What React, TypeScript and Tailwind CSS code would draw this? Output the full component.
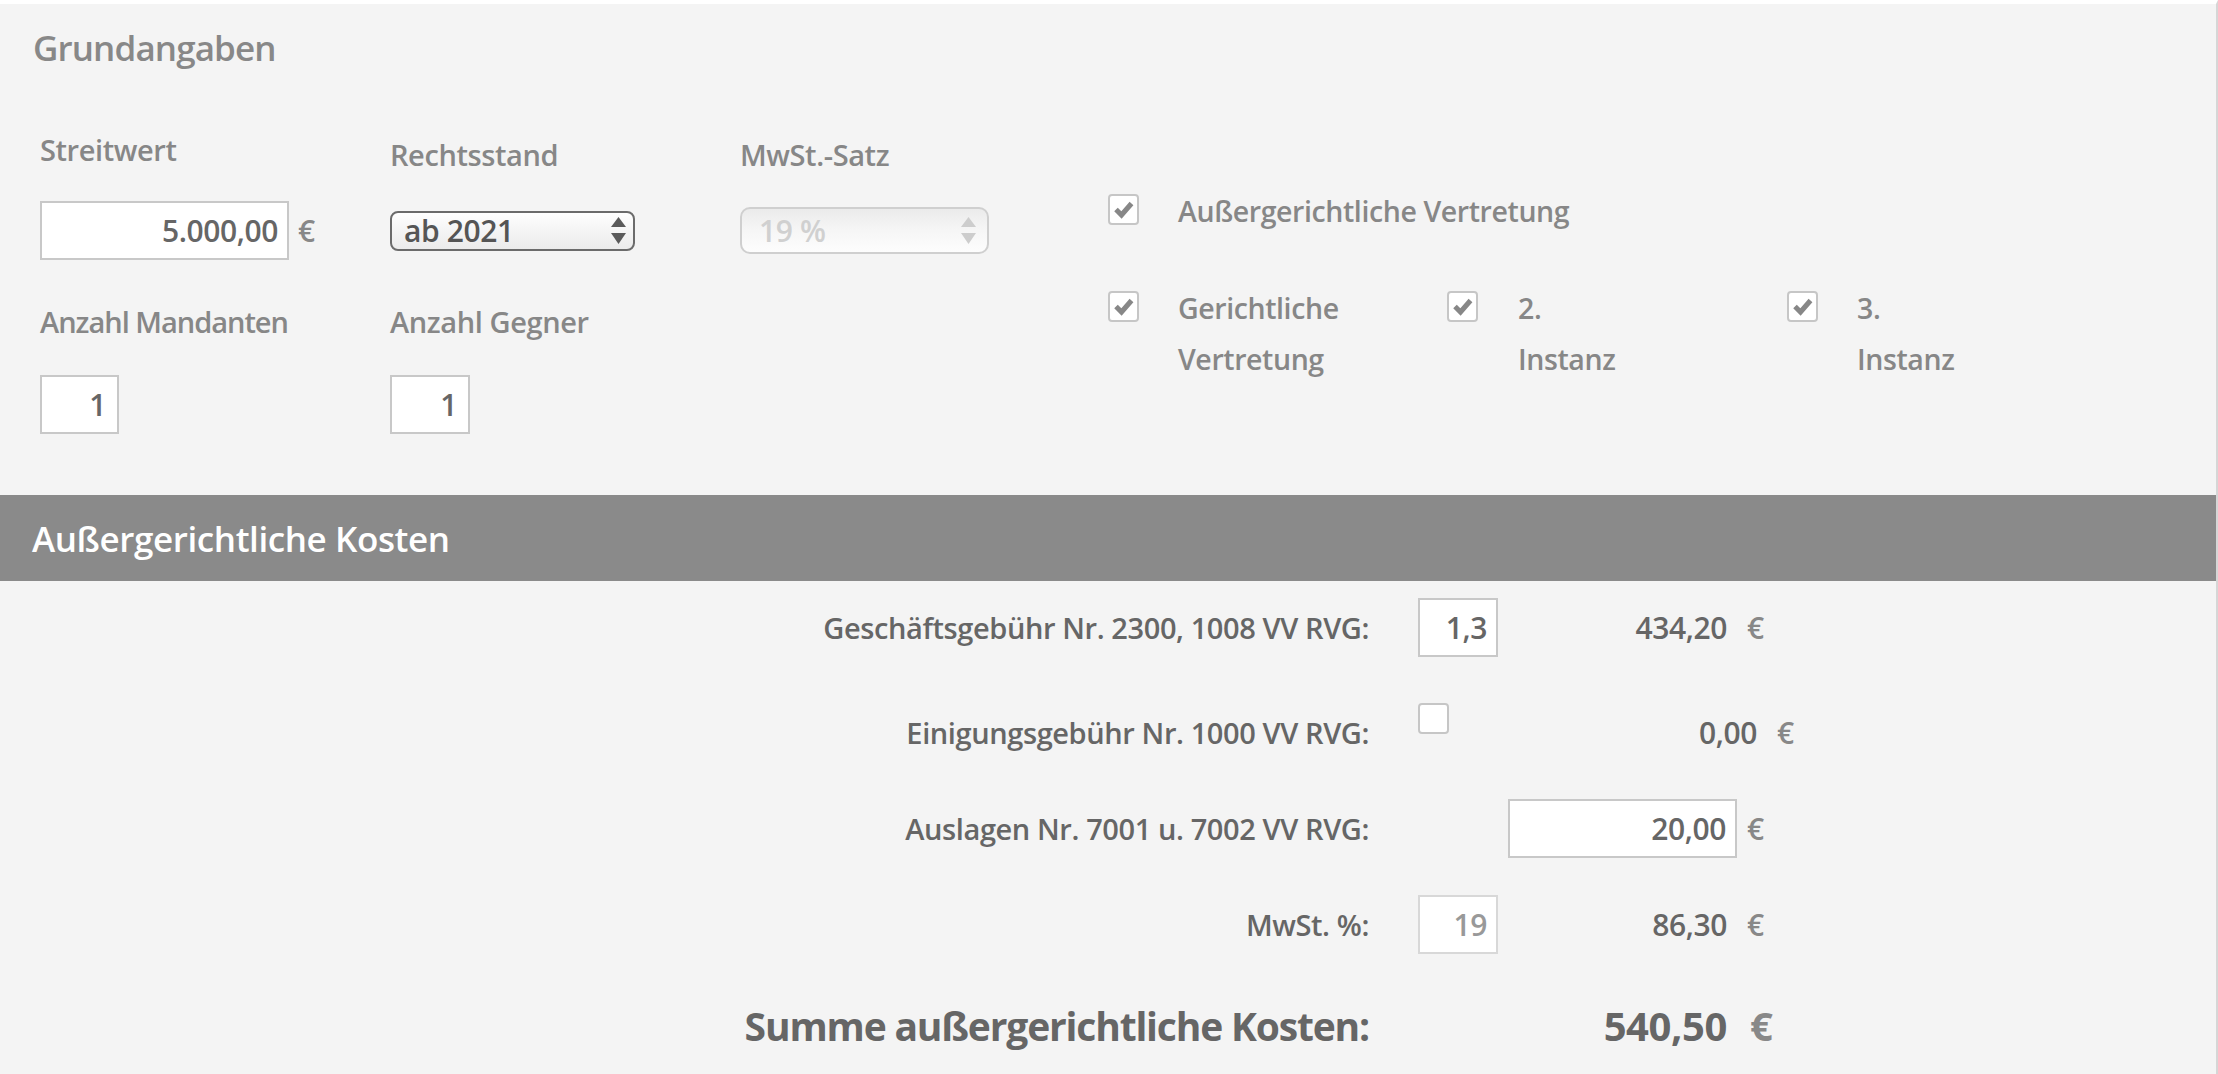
import React from 'react';

const topLabel = 'text-[29px] leading-[30px] font-semibold text-[#878787]';
const rowLabel = 'w-[1369px] shrink-0 text-right text-[29px] leading-[59px] font-semibold text-[#666]';
const amount = 'text-right text-[30px] leading-[59px] font-semibold text-[#666]';
const euro = 'text-[30px] leading-[59px] font-semibold text-[#888]';
const field =
  'h-[59px] border-2 border-[#c8c8c8] bg-white pr-[9px] text-right text-[30px] font-semibold text-[#666] outline-none';

function Check({ checked }: { checked: boolean }) {
  return (
    <span className="inline-flex h-[31px] w-[31px] shrink-0 items-center justify-center rounded-[4px] border-2 border-[#c6c6c6] bg-white">
      {checked && (
        <svg viewBox="0 0 27 27" className="h-[27px] w-[27px]">
          <path d="M6 13.5 L11.5 19 L21.5 7.5" fill="none" stroke="#878787" strokeWidth="5" />
        </svg>
      )}
    </span>
  );
}

function Arrows({ color }: { color: string }) {
  return (
    <svg viewBox="0 0 15 27" className="h-[27px] w-[15px]">
      <path d="M7.5 0 L15 10 L0 10 Z" fill={color} />
      <path d="M0 16 L15 16 L7.5 27 Z" fill={color} />
    </svg>
  );
}

export default function App() {
  return (
    <div className="min-h-screen border-t-4 border-r-2 border-t-white border-r-[#d6d6d6] bg-[#f4f4f4] font-['Open_Sans',sans-serif] tracking-[-0.025em]">
      {/* ---------------- Grundangaben ---------------- */}
      <section className="pt-[26px] pb-[61px]">
        <h2 className="pl-[33px] text-[35px] leading-[36px] font-semibold tracking-[-0.025em] text-[#888]">
          Grundangaben
        </h2>

        <div className="mt-[69px] flex items-start pl-[40px]">
          <div className="grid grid-cols-[350px_350px_350px]">
            {/* labels */}
            <div className="h-[66px]">
              <div className={topLabel}>Streitwert</div>
            </div>
            <div className="h-[66px] pt-[5px]">
              <div className={topLabel}>Rechtsstand</div>
            </div>
            <div className="h-[66px] pt-[5px]">
              <div className={topLabel}>MwSt.-Satz</div>
            </div>

            {/* inputs */}
            <div className="flex h-[59px] items-center">
              <input readOnly defaultValue="5.000,00" className={`${field} w-[249px]`} />
              <span className="ml-[9px] text-[30px] font-semibold text-[#888]">€</span>
            </div>
            <div className="flex h-[59px] items-center">
              <div className="flex h-[40px] w-[245px] items-center justify-between rounded-[8px] border-2 border-[#6b6b6b] bg-linear-to-b from-[#fefefe] to-[#ebebeb] pr-[7px] pl-[12px]">
                <span className="text-[30px] leading-none font-semibold text-[#555]">ab 2021</span>
                <Arrows color="#5a5a5a" />
              </div>
            </div>
            <div className="flex h-[59px] items-center">
              <div className="flex h-[47px] w-[249px] items-center justify-between rounded-[10px] border-2 border-[#cfcfcf] bg-linear-to-b from-[#ebebeb] via-[#f6f6f6] to-[#fdfdfd] pr-[11px] pl-[17px]">
                <span className="text-[30px] leading-none font-semibold text-[#d0d0d0]">19 %</span>
                <Arrows color="#cdcdcd" />
              </div>
            </div>

            {/* labels row 2 */}
            <div className="h-[115px] pt-[47px]">
              <div className={`${topLabel} tracking-[-0.035em]`}>Anzahl Mandanten</div>
            </div>
            <div className="h-[115px] pt-[47px]">
              <div className={topLabel}>Anzahl Gegner</div>
            </div>
            <div className="h-[115px]" />

            {/* boxes */}
            <div>
              <input readOnly defaultValue="1" className={`${field} w-[79px] pr-[11px]`} />
            </div>
            <div>
              <input readOnly defaultValue="1" className={`${field} w-[80px] pr-[11px]`} />
            </div>
            <div />
          </div>

          {/* Vertretung */}
          <div className="mt-[51px] ml-[18px] text-[28.5px] leading-[51px] font-semibold text-[#878787]">
            <div className="flex items-start">
              <span className="mt-[1px]">
                <Check checked />
              </span>
              <span className="ml-[39px]">Außergerichtliche Vertretung</span>
            </div>
            <div className="mt-[45px] flex items-start">
              <div className="flex w-[339px] items-start">
                <span className="mt-[1px]">
                  <Check checked />
                </span>
                <span className="ml-[39px]">
                  Gerichtliche
                  <br />
                  Vertretung
                </span>
              </div>
              <div className="flex w-[340px] items-start">
                <span className="mt-[1px]">
                  <Check checked />
                </span>
                <span className="ml-[40px]">
                  2.
                  <br />
                  Instanz
                </span>
              </div>
              <div className="flex items-start">
                <span className="mt-[1px]">
                  <Check checked />
                </span>
                <span className="ml-[39px]">
                  3.
                  <br />
                  Instanz
                </span>
              </div>
            </div>
          </div>
        </div>
      </section>

      {/* ---------------- Außergerichtliche Kosten ---------------- */}
      <div className="flex h-[86px] items-center bg-[#8a8a8a] pl-[32px]">
        <h2 className="text-[35px] leading-none font-semibold text-white">Außergerichtliche Kosten</h2>
      </div>

      <section className="pt-[17px] pb-[40px]">
        <div className="flex h-[59px]">
          <div className={rowLabel}>Geschäftsgebühr Nr. 2300, 1008 VV RVG:</div>
          <input readOnly defaultValue="1,3" className={`${field} ml-[49px] w-[80px]`} />
          <div className={`${amount} w-[229px]`}>434,20</div>
          <div className={`${euro} ml-[20px]`}>€</div>
        </div>

        <div className="mt-[46px] flex h-[59px]">
          <div className={rowLabel}>Einigungsgebühr Nr. 1000 VV RVG:</div>
          <span className="ml-[49px]">
            <Check checked={false} />
          </span>
          <div className={`${amount} w-[308px]`}>0,00</div>
          <div className={`${euro} ml-[20px]`}>€</div>
        </div>

        <div className="mt-[37px] flex h-[59px]">
          <div className={rowLabel}>Auslagen Nr. 7001 u. 7002 VV RVG:</div>
          <input readOnly defaultValue="20,00" className={`${field} ml-[139px] w-[229px]`} />
          <div className={`${euro} ml-[10px]`}>€</div>
        </div>

        <div className="mt-[37px] flex h-[59px]">
          <div className={rowLabel}>MwSt. %:</div>
          <input
            readOnly
            defaultValue="19"
            className="ml-[49px] h-[59px] w-[80px] border-2 border-[#d8d8d8] bg-white pr-[9px] text-right text-[30px] font-semibold text-[#999] outline-none"
          />
          <div className={`${amount} w-[229px]`}>86,30</div>
          <div className={`${euro} ml-[20px]`}>€</div>
        </div>

        <div className="mt-[42px] flex h-[59px]">
          <div className="w-[1369px] shrink-0 text-right text-[39px] leading-[59px] font-bold tracking-[-0.03em] text-[#666]">
            Summe außergerichtliche Kosten:
          </div>
          <div className="w-[358px] text-right text-[40px] leading-[59px] font-bold text-[#666]">540,50</div>
          <div className="ml-[23px] text-[40px] leading-[59px] font-bold text-[#888]">€</div>
        </div>
      </section>
    </div>
  );
}
